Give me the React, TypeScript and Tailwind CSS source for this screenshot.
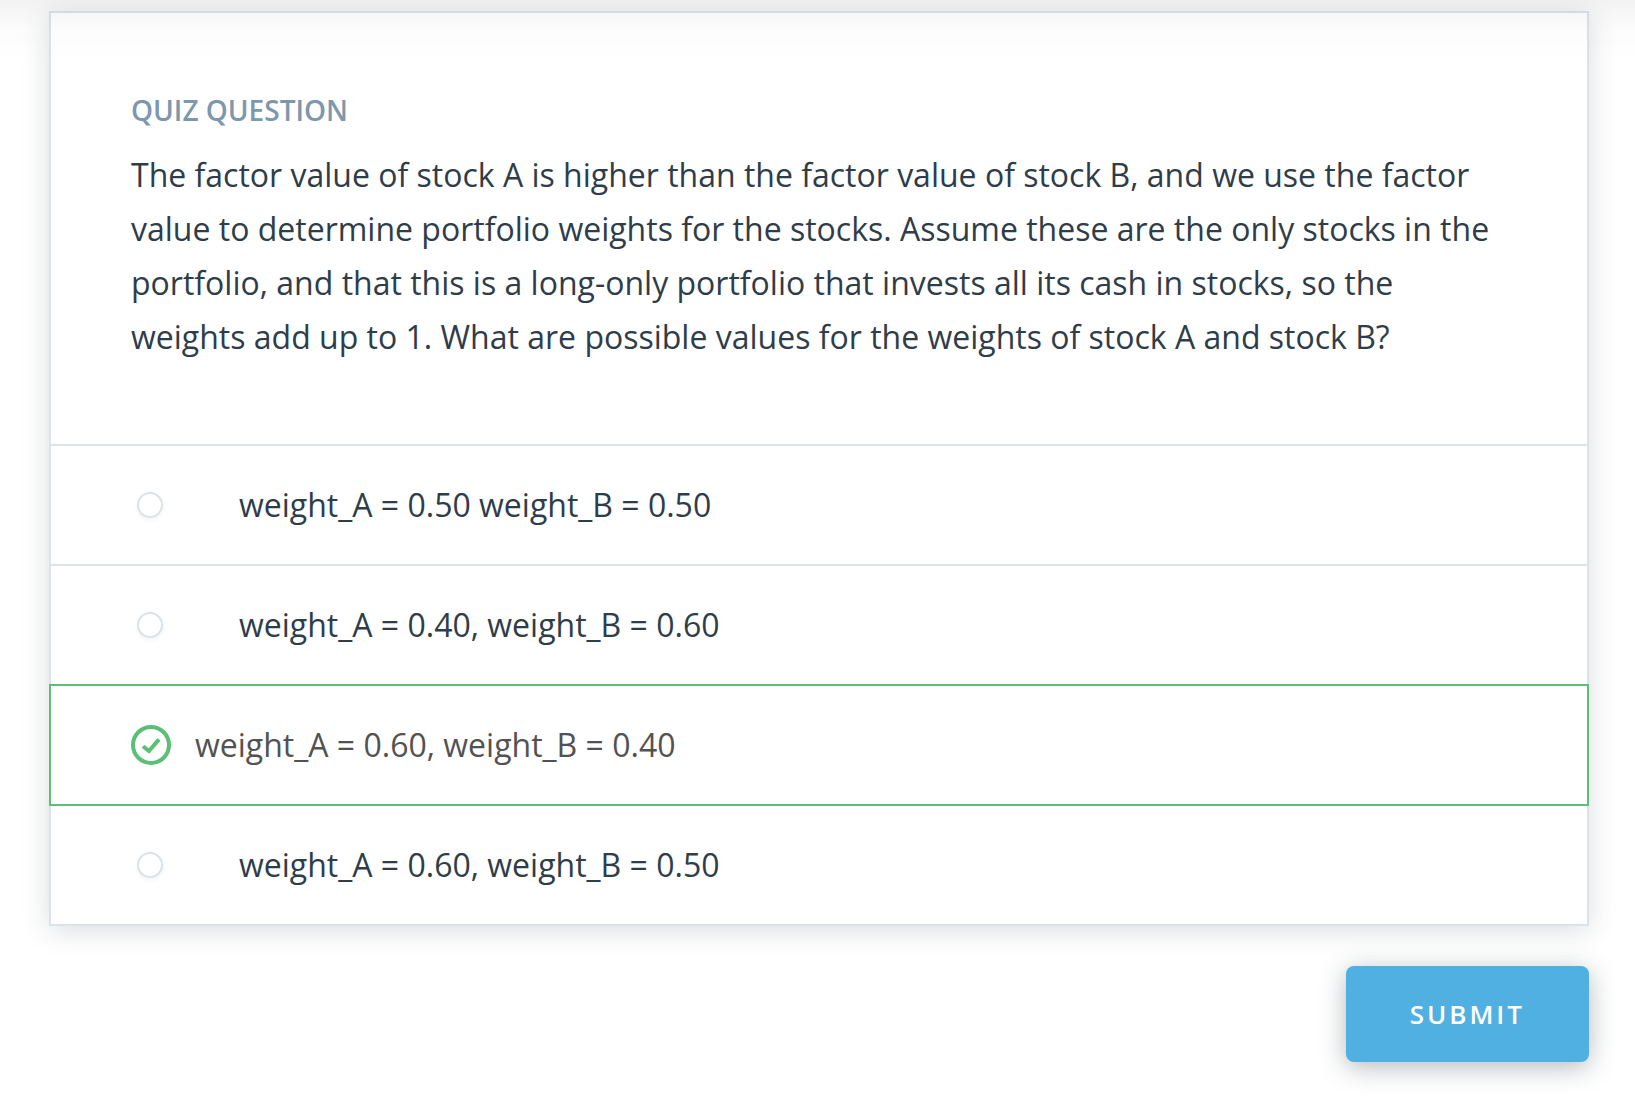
import { useState } from "react";

const OPTIONS = [
  "weight_A = 0.50 weight_B = 0.50",
  "weight_A = 0.40, weight_B = 0.60",
  "weight_A = 0.60, weight_B = 0.40",
  "weight_A = 0.60, weight_B = 0.50",
];

function CheckCircle() {
  return (
    <svg viewBox="0 0 40 40" className="size-10 shrink-0" fill="none" stroke="#5bbf75" aria-hidden="true">
      <circle cx="20" cy="20" r="18" strokeWidth="4" />
      <path d="M12 21.2 L18 26 L28 14.4" strokeWidth="4" />
    </svg>
  );
}

type OptionProps = {
  index: number;
  label: string;
  chosen: boolean;
  afterChosen: boolean;
  onChoose: () => void;
};

function Option({ index, label, chosen, afterChosen, onChoose }: OptionProps) {
  const id = `option-${index}`;
  const edge = chosen ? "border-y-2 border-[#5bbf75]" : afterChosen ? "border-[#dbe2e8]" : "border-t-2 border-[#dbe2e8]";
  return (
    <label htmlFor={id} className={`flex cursor-pointer items-center border-x-2 px-20 py-8 last:border-b-2 ${edge}`}>
      <input
        id={id}
        type="radio"
        name="answer"
        checked={chosen}
        onChange={onChoose}
        className={
          chosen
            ? "sr-only"
            : "mx-1.5 size-[26px] shrink-0 appearance-none rounded-full border-2 border-[#dbe2e8] bg-white shadow-[0_2px_4px_rgba(46,60,73,0.06)]"
        }
      />
      {chosen && <CheckCircle />}
      <span className={chosen ? "ml-6 text-[#525252]" : "ml-[70px] text-[#2e3d49]"}>{label}</span>
    </label>
  );
}

export default function App() {
  const [answer, setAnswer] = useState(2);
  return (
    <div className="relative min-h-screen bg-white pt-[11px] pr-[46px] pb-8 pl-[49px] font-['Open_Sans',sans-serif] text-[32px] leading-[54px] text-[#2e3d49]">
      <div className="pointer-events-none absolute inset-x-0 top-0 h-16 bg-linear-to-b from-black/5 via-black/1 to-transparent" />
      <form className="flex flex-col gap-10" onSubmit={(e) => e.preventDefault()}>
        <fieldset className="bg-white shadow-[0_4px_26px_rgba(46,60,73,0.18)]">
          <div className="flex flex-col gap-5 border-x-2 border-t-2 border-[#dbe2e8] px-20 pt-[79px] pb-20">
            <h1 className="text-[28px] leading-9 font-semibold text-[#7d97ad]">QUIZ QUESTION</h1>
            <p>
              The factor value of stock A is higher than the factor value of stock B, and we use the factor value to
              determine portfolio weights for the stocks. Assume these are the only stocks in the portfolio, and that
              this is a long-only portfolio that invests all its cash in stocks, so the weights add up to 1. What are
              possible values for the weights of stock A and stock B?
            </p>
          </div>
          {OPTIONS.map((label, i) => (
            <Option
              key={label}
              index={i}
              label={label}
              chosen={i === answer}
              afterChosen={i === answer + 1}
              onChoose={() => setAnswer(i)}
            />
          ))}
        </fieldset>
        <button
          type="submit"
          className="self-end rounded-lg bg-[#4fb0e1] px-16 py-[21px] text-[26px] font-semibold tracking-[3px] text-white shadow-[0_5px_26px_rgba(46,61,73,0.36)]"
        >
          SUBMIT
        </button>
      </form>
    </div>
  );
}
